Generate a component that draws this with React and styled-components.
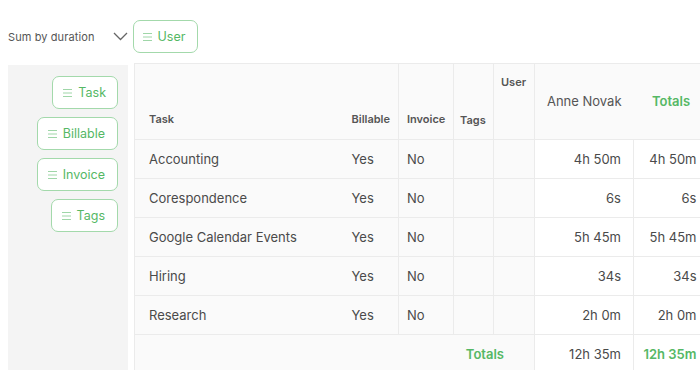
import React from "react";
import styled, { createGlobalStyle } from "styled-components";

const Global = createGlobalStyle`
  html, body { margin: 0; padding: 0; background: #fff; }
  body { font-family: "Inter", "Open Sans", sans-serif; overflow: hidden; width: 700px; height: 370px; }
`;

const GREEN = "#55b865";
const GREEN_BORDER = "#a3d9ab";
const LINE = "#ebebeb";

const Page = styled.div`
  width: 700px;
  height: 370px;
  overflow: hidden;
  padding-left: 8px;
  box-sizing: border-box;
`;

const TopBar = styled.div`
  display: flex;
  align-items: center;
  height: 33px;
  margin-top: 20px;
`;

const SumLabel = styled.span`
  font-size: 11px;
  color: #555;
  letter-spacing: 0.1px;
`;

const Chevron = styled.svg`
  margin-left: 18px;
  margin-right: 5px;
  flex: none;
`;

const PillButton = styled.button`
  display: inline-flex;
  align-items: center;
  gap: 6px;
  height: 33px;
  box-sizing: border-box;
  padding: 0 ${(p) => p.$pr || 12}px 0 ${(p) => p.$pl || 10}px;
  border: 1px solid ${GREEN_BORDER};
  border-radius: 7px;
  background: #fff;
  color: ${GREEN};
  font-family: inherit;
  font-size: 12.5px;
  cursor: pointer;
`;

const Body = styled.div`
  display: flex;
  margin-top: 10px;
  align-items: flex-start;
`;

const SidePanel = styled.div`
  width: 120px;
  height: 310px;
  margin-top: 2px;
  margin-right: 6px;
  background: #f4f4f4;
  display: flex;
  flex-direction: column;
  align-items: flex-end;
  padding: 11px 10px 0 0;
  box-sizing: border-box;
  gap: 8px;
  flex: none;
`;

const Table = styled.table`
  border-collapse: collapse;
  table-layout: fixed;
  width: 574px;
  flex: none;
  border-top: 1px solid ${LINE};
  border-left: 1px solid ${LINE};
`;

const HeadRow = styled.tr`
  height: 76px;
`;

const Row = styled.tr`
  height: 39px;
`;

const Th = styled.th`
  background: #fafafa;
  font-size: 11px;
  font-weight: 600;
  color: #555;
  text-align: ${(p) => p.$align || "left"};
  vertical-align: ${(p) => p.$valign || "bottom"};
  padding: ${(p) => p.$pad || "0 6px 13px 8px"};
  border-left: ${(p) => (p.$noLeft ? "none" : `1px solid ${LINE}`)};
  border-bottom: 1px solid ${LINE};
  white-space: nowrap;
`;

const ValueHead = styled(Th)`
  font-size: 13px;
  font-weight: ${(p) => (p.$green ? 600 : 400)};
  color: ${(p) => (p.$green ? GREEN : "#555")};
  text-align: center;
  vertical-align: middle;
  padding: 0 0 2px;
`;

const Td = styled.td`
  background: ${(p) => (p.$white ? "#fff" : "#fafafa")};
  font-size: 13px;
  color: #4a4a4a;
  text-align: ${(p) => p.$align || "left"};
  padding: ${(p) => p.$pad || "0 6px 0 8px"};
  border-left: ${(p) => (p.$noLeft ? "none" : `1px solid ${LINE}`)};
  border-bottom: 1px solid ${LINE};
  white-space: nowrap;
`;

const TotalsLabel = styled(Td)`
  color: ${GREEN};
  font-weight: 600;
  text-align: right;
  padding-right: 30px;
  border-bottom: none;
`;

const TotalValue = styled(Td)`
  color: ${(p) => (p.$green ? GREEN : "#4a4a4a")};
  font-weight: ${(p) => (p.$green ? 600 : 400)};
  border-bottom: none;
`;

const MenuIcon = () => (
  <svg width="9" height="8" viewBox="0 0 9 8" aria-hidden="true">
    <g stroke="#9fd6a8" strokeWidth="1">
      <line x1="0" y1="0.5" x2="9" y2="0.5" />
      <line x1="0" y1="4" x2="9" y2="4" />
      <line x1="0" y1="7.5" x2="9" y2="7.5" />
    </g>
  </svg>
);

const rows = [
  ["Accounting", "4h 50m"],
  ["Corespondence", "6s"],
  ["Google Calendar Events", "5h 45m"],
  ["Hiring", "34s"],
  ["Research", "2h 0m"],
];

export default function App() {
  return (
    <Page>
      <Global />
      <TopBar>
        <SumLabel>Sum by duration</SumLabel>
        <Chevron width="15" height="9" viewBox="0 0 15 9">
          <path d="M1 1 L7.5 7.5 L14 1" fill="none" stroke="#666" strokeWidth="1.3" />
        </Chevron>
        <PillButton $pl={9} $pr={12}>
          <MenuIcon />
          User
        </PillButton>
      </TopBar>
      <Body>
        <SidePanel>
          <PillButton $pr={11}>
            <MenuIcon />
            Task
          </PillButton>
          <PillButton>
            <MenuIcon />
            Billable
          </PillButton>
          <PillButton>
            <MenuIcon />
            Invoice
          </PillButton>
          <PillButton>
            <MenuIcon />
            Tags
          </PillButton>
        </SidePanel>
        <Table>
          <colgroup>
            <col style={{ width: 209 }} />
            <col style={{ width: 55 }} />
            <col style={{ width: 55 }} />
            <col style={{ width: 40 }} />
            <col style={{ width: 41 }} />
            <col style={{ width: 99 }} />
            <col style={{ width: 75 }} />
          </colgroup>
          <thead>
            <HeadRow>
              <Th $pad="0 6px 13px 14px">Task</Th>
              <Th $noLeft>Billable</Th>
              <Th>Invoice</Th>
              <Th $pad="0 4px 12px 6px">Tags</Th>
              <Th $valign="top" $pad="11px 4px 0 7px">User</Th>
              <ValueHead>Anne Novak</ValueHead>
              <ValueHead $green $noLeft>Totals</ValueHead>
            </HeadRow>
          </thead>
          <tbody>
            {rows.map(([task, dur]) => (
              <Row key={task}>
                <Td $pad="0 6px 0 14px">{task}</Td>
                <Td $noLeft>Yes</Td>
                <Td>No</Td>
                <Td />
                <Td />
                <Td $white $align="right" $pad="0 12px 0 0">{dur}</Td>
                <Td $white $align="right" $pad="0 12px 0 0">{dur}</Td>
              </Row>
            ))}
            <Row>
              <TotalsLabel colSpan={5}>Totals</TotalsLabel>
              <TotalValue $white $align="right" $pad="0 12px 0 0">12h 35m</TotalValue>
              <TotalValue $white $green $align="right" $pad="0 12px 0 0">12h 35m</TotalValue>
            </Row>
          </tbody>
        </Table>
      </Body>
    </Page>
  );
}
